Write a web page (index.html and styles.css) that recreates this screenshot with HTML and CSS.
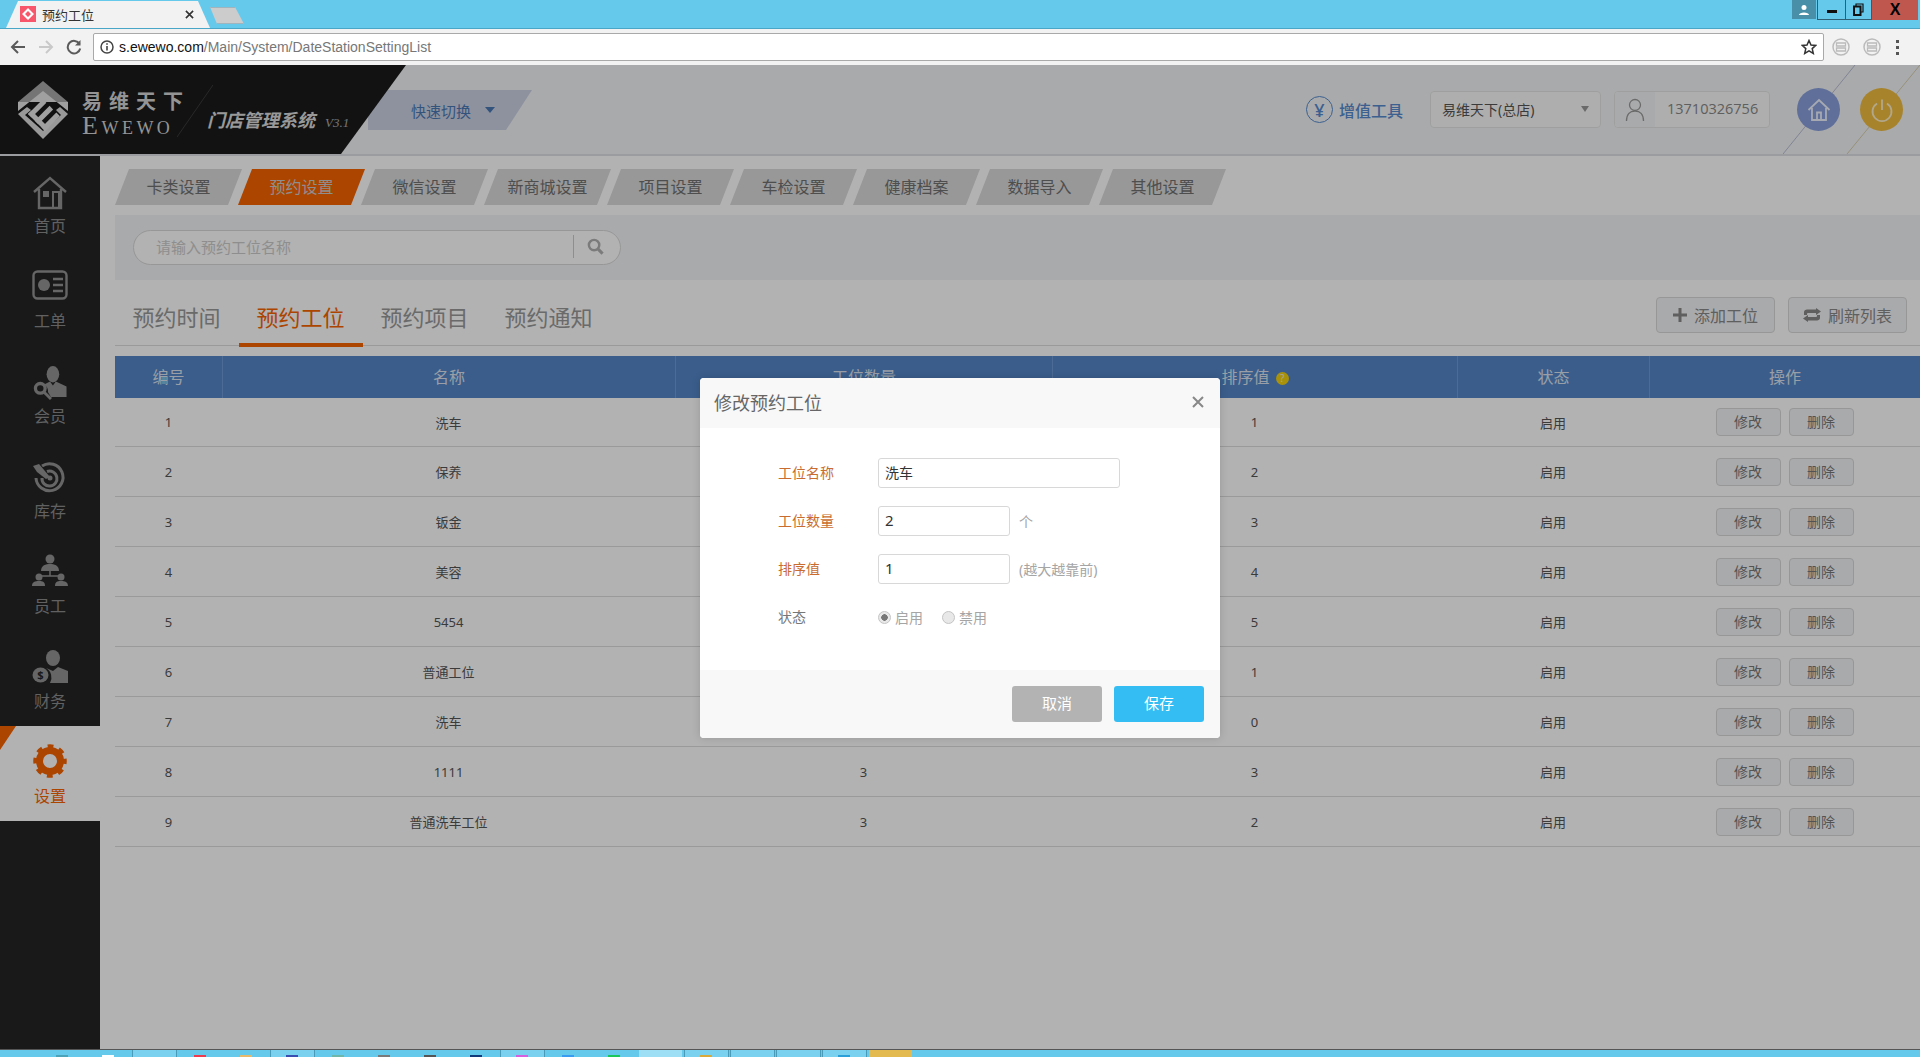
FILE: index.html
```html
<!DOCTYPE html>
<html lang="zh-CN">
<head>
<meta charset="utf-8">
<title>预约工位</title>
<link rel="stylesheet" href="styles.css">
</head>
<body>

<div class="tabstrip">
	<div class="chrome-tab">
		<svg class="favicon" viewBox="0 0 16 16"><rect width="16" height="16" fill="#f8566a"/><path d="M8 2 14 8 8 14 2 8Z M8 5 5 8 8 11 11 8Z" fill="#fff" fill-rule="evenodd"/></svg>
		<span class="chrome-title">预约工位</span>
		<svg class="chrome-close" viewBox="0 0 10 10"><path d="M1 1 9 9M9 1 1 9" stroke="#333" stroke-width="1.8"/></svg>
	</div>
	<div class="new-tab"></div>
	<div class="win-controls">
		<div class="win-user"><svg viewBox="0 0 12 12" width="12" height="12"><circle cx="6" cy="3.5" r="2.5" fill="#fff"/><path d="M1 11C1 7.500 11 7.500 11 11Z" fill="#fff"/></svg></div>
		<div class="win-btn win-min"><i></i></div>
		<div class="win-btn win-max"><svg viewBox="0 0 11 13" width="11" height="13"><path d="M3 3V1H10V9H8" fill="none" stroke="#111" stroke-width="1.2"/><rect x="1" y="3.500" width="6.500" height="8.500" fill="none" stroke="#111" stroke-width="2"/></svg></div>
		<div class="win-btn win-close">X</div>
	</div>
</div>

<div class="toolbar">
	<svg class="tool-icon" viewBox="0 0 16 16"><path d="M15 8H3M8 2 2 8 8 14" fill="none" stroke="#5a5a5a" stroke-width="2"/></svg>
	<svg class="tool-icon" viewBox="0 0 16 16"><path d="M1 8H13M8 2 14 8 8 14" fill="none" stroke="#c9c9c9" stroke-width="2"/></svg>
	<svg class="tool-icon" viewBox="0 0 16 16"><path d="M13.500 5A6.300 6.300 0 1 0 14.200 9.500" fill="none" stroke="#5a5a5a" stroke-width="2"/><path d="M14.500 1V6.500H9Z" fill="#5a5a5a"/></svg>
	<div class="addressbar">
		<svg class="info-icon" viewBox="0 0 14 14"><circle cx="7" cy="7" r="6" fill="none" stroke="#444" stroke-width="1.500"/><path d="M7 6V10.500M7 3.200V4.800" stroke="#444" stroke-width="1.600"/></svg>
		<span class="url"><b>s.ewewo.com</b>/Main/System/DateStationSettingList</span>
		<svg class="star-icon" viewBox="0 0 16 16"><path d="M8 1.500 10 6 14.800 6.400 11.200 9.600 12.300 14.400 8 11.800 3.700 14.400 4.800 9.600 1.200 6.400 6 6Z" fill="none" stroke="#333" stroke-width="1.500"/></svg>
	</div>
	<svg class="ext-icon" viewBox="0 0 18 18"><circle cx="9" cy="9" r="8" fill="none" stroke="#bbb" stroke-width="1.500"/><path d="M4.500 5H13.500V8H4.500ZM4.500 10H13.500V13H4.500Z" fill="none" stroke="#bbb" stroke-width="1.300"/></svg>
	<svg class="ext-icon" viewBox="0 0 18 18"><circle cx="9" cy="9" r="8" fill="none" stroke="#bbb" stroke-width="1.500"/><path d="M4.500 5H13.500V8H4.500ZM4.500 10H13.500V13H4.500Z" fill="none" stroke="#bbb" stroke-width="1.300"/></svg>
	<div class="menu-dots"><i></i><i></i><i></i></div>
</div>

<div class="app">
	<div class="header">
		<svg class="header-lines" viewBox="0 0 137 90" width="137" height="90"><path d="M72 0 0 89" stroke="#b9bdd4" fill="none"/><path d="M137 0 64 89" stroke="#d8cfae" fill="none"/></svg>
		<div class="brand">
			<svg class="logo" viewBox="0 0 50 58" width="50" height="58">
				<path d="M25 0 50 21H0Z" fill="#a8a8a8"/>
				<path d="M0 21H50V30L25 10 0 30Z" fill="#e6e6e6"/>
				<path d="M0 33 9 26 13 29 7 34 25 50 43 34 38 29 42 26 50 33 25 58Z" fill="#dcdcdc"/>
				<g transform="rotate(-45 27 33)" fill="#e6e6e6">
					<rect x="15" y="21" width="5" height="24"/>
					<rect x="15" y="21" width="21" height="5"/>
					<rect x="15" y="30.500" width="21" height="5"/>
					<rect x="15" y="40" width="21" height="5"/>
				</g>
			</svg>
			<div class="brand-name">
				<div class="brand-cn">易维天下</div>
				<div class="brand-en"><span>E</span>WEWO</div>
			</div>
			<svg class="brand-slash" viewBox="0 0 36 52" width="36" height="52"><path d="M36 0 0 52" stroke="#3a3a3a" fill="none"/></svg>
			<div class="brand-sys">门店管理系统<span>V3.1</span></div>
		</div>
		<div class="switch">快速切换<i class="caret"></i></div>
		<div class="head-right">
			<div class="tools"><span class="yen">¥</span>增值工具</div>
			<div class="shop">易维天下(总店)<i class="shop-caret"></i></div>
			<div class="account">
				<div class="account-icon"><svg viewBox="0 0 20 24" width="20" height="24"><circle cx="10" cy="7" r="5.500" fill="none" stroke="#9a9a9a" stroke-width="1.300"/><path d="M1.500 23C1.500 16 5 13 10 13S18.500 16 18.500 23" fill="none" stroke="#9a9a9a" stroke-width="1.300"/></svg></div>
				<div class="account-no">13710326756</div>
			</div>
			<div class="round round-home"><svg viewBox="0 0 24 24" width="24" height="24"><path d="M1.500 12 12 2 22.500 12M5 10V22H19V10M10 22V14.500H14V22" fill="none" stroke="#eef2ff" stroke-width="1.800"/></svg></div>
			<div class="round round-power"><svg viewBox="0 0 24 24" width="24" height="24"><path d="M12 1.500V12M7 5.500A9.500 9.500 0 1 0 17 5.500" fill="none" stroke="#fff0c8" stroke-width="1.800"/></svg></div>
		</div>
	</div>

	<div class="body">
		<div class="sidebar">
			<div class="side-item">
				<svg viewBox="0 0 34 34" width="34" height="34"><path d="M1 16 17 2 33 16M6 13V32H28V13" fill="none" stroke="#929292" stroke-width="2.400"/><rect x="10" y="15" width="6" height="6" fill="#929292"/><path d="M20 31V16H26V31" fill="none" stroke="#929292" stroke-width="2"/></svg>
				<span>首页</span>
			</div>
			<div class="side-item">
				<svg viewBox="0 1 36 34" width="36" height="34"><rect x="1.500" y="1.500" width="33" height="27" rx="4" fill="none" stroke="#929292" stroke-width="2.400"/><circle cx="12" cy="15" r="6" fill="#929292"/><path d="M21 9H31M21 15H31M21 21H31" stroke="#929292" stroke-width="2.400"/></svg>
				<span>工单</span>
			</div>
			<div class="side-item">
				<svg viewBox="0 0 36 35" width="36" height="35"><ellipse cx="21" cy="8.500" rx="6.500" ry="8.500" fill="#929292"/><path d="M12 19 18 16 21 20 24 16 35 21V32H19L16 27A9 9 0 0 0 12 19Z" fill="#929292"/><circle cx="8" cy="23" r="5" fill="none" stroke="#929292" stroke-width="3.400"/><path d="M12 27 19 34" stroke="#929292" stroke-width="3"/></svg>
				<span>会员</span>
			</div>
			<div class="side-item">
				<svg viewBox="0 0 36 30" width="36" height="30"><path d="M10 3A13.500 13.500 0 1 1 4 15" fill="none" stroke="#929292" stroke-width="3"/><path d="M15 8.500A7.500 7.500 0 1 1 10 15" fill="none" stroke="#929292" stroke-width="3"/><circle cx="18" cy="15" r="2.500" fill="#929292"/><path d="M1 3 7 1 18 14 14 16 5 9Z" fill="#929292"/></svg>
				<span>库存</span>
			</div>
			<div class="side-item">
				<svg viewBox="0 3 36 34" width="36" height="34"><circle cx="18" cy="6" r="4.500" fill="#929292"/><path d="M9 18C9 12 14 11 18 11S27 12 27 18Z" fill="#929292"/><path d="M18 18V23M8 23H28" stroke="#929292" stroke-width="1.500"/><circle cx="7" cy="24" r="3.500" fill="#929292"/><circle cx="29" cy="24" r="3.500" fill="#929292"/><path d="M0 33C0 29 3 28 7 28S13 29 13 33ZM23 33C23 29 25 28 29 28S36 29 36 33Z" fill="#929292"/></svg>
				<span>员工</span>
			</div>
			<div class="side-item">
				<svg viewBox="0 1 36 34" width="36" height="34"><ellipse cx="21" cy="8" rx="7" ry="8" fill="#929292"/><path d="M14 18 21 21 26 17 36 21V33H18A11 11 0 0 0 14 18Z" fill="#929292"/><ellipse cx="8.500" cy="25" rx="8" ry="7.500" fill="#929292"/><text x="8.500" y="29" class="coin">$</text></svg>
				<span>财务</span>
			</div>
			<div class="side-item side-active">
				<i class="side-flag"></i>
				<svg viewBox="0 2 34 34" width="34" height="34"><circle cx="17" cy="17" r="10.500" fill="none" stroke="#f76300" stroke-width="7"/><circle cx="17" cy="17" r="14" fill="none" stroke="#f76300" stroke-width="5.500" stroke-dasharray="5.500 5.500" stroke-dashoffset="2.700"/></svg>
				<span>设置</span>
			</div>
		</div>

		<div class="content">
			<div class="tabs">
				<div class="tab">卡类设置</div>
				<div class="tab tab-active">预约设置</div>
				<div class="tab">微信设置</div>
				<div class="tab">新商城设置</div>
				<div class="tab">项目设置</div>
				<div class="tab">车检设置</div>
				<div class="tab">健康档案</div>
				<div class="tab">数据导入</div>
				<div class="tab">其他设置</div>
			</div>
			<div class="search-panel">
				<div class="search-box">
					<span class="search-text">请输入预约工位名称</span>
					<div class="search-btn"><svg viewBox="0 0 18 18" width="17" height="17"><circle cx="7.500" cy="7.500" r="5.500" fill="none" stroke="#b0b0b0" stroke-width="2.600"/><path d="M11.500 11.500 16.500 16.500" stroke="#b0b0b0" stroke-width="3.200"/></svg></div>
				</div>
			</div>
			<div class="subnav">
				<div class="subtab">预约时间</div>
				<div class="subtab subtab-active">预约工位</div>
				<div class="subtab">预约项目</div>
				<div class="subtab">预约通知</div>
				<div class="subnav-btns">
					<div class="btn"><svg viewBox="0 0 14 14" width="14" height="14"><path d="M7 0V14M0 7H14" stroke="#888" stroke-width="3"/></svg>添加工位</div>
					<div class="btn"><svg viewBox="0 0 18 14" width="18" height="14"><path d="M1 7V4C1 2.500 2.500 1.500 4 1.500H13V0L18 3.500 13 7V5H5C4.500 5 4 5.500 4 6V7ZM17 7V10C17 11.500 15.500 12.500 14 12.500H5V14L0 10.500 5 7V9H13C13.500 9 14 8.500 14 8V7Z" fill="#888"/></svg>刷新列表</div>
				</div>
			</div>
			<table class="list">
				<colgroup><col class="c1"><col class="c2"><col class="c3"><col class="c4"><col class="c5"><col class="c6"></colgroup>
				<thead>
					<tr><th>编号</th><th>名称</th><th>工位数量</th><th>排序值 <i class="help">?</i></th><th>状态</th><th>操作</th></tr>
				</thead>
				<tbody>
					<tr><td>1</td><td>洗车</td><td>2</td><td>1</td><td>启用</td><td><span class="mini">修改</span><span class="mini">删除</span></td></tr>
					<tr><td>2</td><td>保养</td><td>3</td><td>2</td><td>启用</td><td><span class="mini">修改</span><span class="mini">删除</span></td></tr>
					<tr><td>3</td><td>钣金</td><td>3</td><td>3</td><td>启用</td><td><span class="mini">修改</span><span class="mini">删除</span></td></tr>
					<tr><td>4</td><td>美容</td><td>3</td><td>4</td><td>启用</td><td><span class="mini">修改</span><span class="mini">删除</span></td></tr>
					<tr><td>5</td><td>5454</td><td>3</td><td>5</td><td>启用</td><td><span class="mini">修改</span><span class="mini">删除</span></td></tr>
					<tr><td>6</td><td>普通工位</td><td>3</td><td>1</td><td>启用</td><td><span class="mini">修改</span><span class="mini">删除</span></td></tr>
					<tr><td>7</td><td>洗车</td><td>3</td><td>0</td><td>启用</td><td><span class="mini">修改</span><span class="mini">删除</span></td></tr>
					<tr><td>8</td><td>1111</td><td>3</td><td>3</td><td>启用</td><td><span class="mini">修改</span><span class="mini">删除</span></td></tr>
					<tr><td>9</td><td>普通洗车工位</td><td>3</td><td>2</td><td>启用</td><td><span class="mini">修改</span><span class="mini">删除</span></td></tr>
				</tbody>
			</table>
		</div>
	</div>

	<div class="mask">
		<div class="dialog">
			<div class="dialog-head">
				<span>修改预约工位</span>
				<svg viewBox="0 0 12 12" width="12" height="12"><path d="M1 1 11 11M11 1 1 11" stroke="#888" stroke-width="2"/></svg>
			</div>
			<div class="dialog-body">
				<div class="field">
					<label class="required">工位名称</label>
					<div class="input input-wide">洗车</div>
				</div>
				<div class="field">
					<label class="required">工位数量</label>
					<div class="input">2</div>
					<span class="hint">个</span>
				</div>
				<div class="field">
					<label class="required">排序值</label>
					<div class="input">1</div>
					<span class="hint">(越大越靠前)</span>
				</div>
				<div class="field">
					<label>状态</label>
					<span class="radio radio-on"></span><span class="radio-text">启用</span>
					<span class="radio"></span><span class="radio-text">禁用</span>
				</div>
			</div>
			<div class="dialog-foot">
				<div class="dlg-btn dlg-cancel">取消</div>
				<div class="dlg-btn dlg-save">保存</div>
			</div>
		</div>
	</div>
</div>

<div class="taskbar">
	<div class="slot"><i class="stub" style="background:#4aa3b8"></i></div>
	<div class="slot"><i class="stub" style="background:#fff"></i></div>
	<div class="slot slot-on"></div>
	<div class="slot"><i class="stub" style="background:#ef3b4e"></i></div>
	<div class="slot"><i class="stub" style="background:#e8b96a"></i></div>
	<div class="slot slot-on"><i class="stub" style="background:#3a4db0"></i></div>
	<div class="slot"><i class="stub" style="background:#6fb7a8"></i></div>
	<div class="slot"><i class="stub" style="background:#7a7a7a"></i></div>
	<div class="slot"><i class="stub" style="background:#555"></i></div>
	<div class="slot"><i class="stub" style="background:#103a7a"></i></div>
	<div class="slot slot-on"><i class="stub" style="background:#d65fe0"></i></div>
	<div class="slot"><i class="stub" style="background:#3a9cf0"></i></div>
	<div class="slot"><i class="stub" style="background:#19c75a"></i></div>
	<div class="slot slot-open"></div>
	<div class="slot slot-on"><i class="stub" style="background:#d9a93a"></i></div>
	<div class="slot slot-on"></div>
	<div class="slot slot-on"></div>
	<div class="slot slot-on"><i class="stub" style="background:#2a9fd8"></i></div>
	<div class="slot slot-gold"></div>
</div>

</body>
</html>
```

FILE: styles.css
```css
* {
	box-sizing: border-box;
}
html, body {
	margin: 0;
	height: 100%;
	overflow: hidden;
}
body {
	display: flex;
	flex-direction: column;
	font-family: "Noto Sans", "Noto Sans CJK SC", sans-serif;
	font-size: 13px;
	color: #555;
	background-color: #fff;
}
i {
	display: block;
	font-style: normal;
}

/* browser frame */
.tabstrip {
	height: 29px;
	display: flex;
	background-color: #65c9ec;
	border-bottom: 1px solid #4aa6c6;
	position: relative;
}
.chrome-tab {
	width: 204px;
	margin-left: 6px;
	padding: 0 16px 0 14px;
	display: flex;
	align-items: center;
	background-color: #f2f2f2;
	clip-path: polygon(0 100%, 12px 1px, 192px 1px, 204px 100%);
}
.favicon {
	width: 16px;
	height: 16px;
	margin-right: 6px;
}
.chrome-title {
	flex: 1;
	font-size: 13px;
	color: #333;
}
.chrome-close {
	width: 9px;
	height: 9px;
}
.new-tab {
	width: 34px;
	height: 17px;
	margin-top: 7px;
	background-color: #ccc;
	border: 1px solid #9fb4bd;
	clip-path: polygon(0 0, 25px 0, 34px 100%, 7px 100%);
}
.win-controls {
	margin-left: auto;
	margin-right: 2px;
	display: flex;
	height: 20px;
}
.win-user {
	width: 24px;
	height: 19px;
	margin-right: 1px;
	background-color: #4a8fa8;
	display: flex;
	align-items: center;
	justify-content: center;
}
.win-btn {
	height: 20px;
	display: flex;
	align-items: center;
	justify-content: center;
	border: 1px solid #2e5f72;
	border-top: 0;
	border-left-width: 1px;
}
.win-min {
	width: 29px;
}
.win-min i {
	width: 10px;
	height: 3px;
	margin-top: 3px;
	background-color: #111;
}
.win-max {
	width: 26px;
	border-left: 0;
}
.win-close {
	width: 46px;
	border: 0;
	background-color: #c0574f;
	font: bold 16px "Liberation Sans", sans-serif;
	color: #000;
}
.toolbar {
	height: 36px;
	display: flex;
	align-items: center;
	padding: 0 10px 0 10px;
	background-color: #f2f2f2;
}
.tool-icon {
	width: 16px;
	height: 16px;
	margin-right: 12px;
}
.toolbar .tool-icon:nth-child(3) {
	margin-right: 11px;
}
.addressbar {
	width: 1731px;
	height: 28px;
	display: flex;
	align-items: center;
	padding: 0 6px;
	background-color: #fff;
	border: 1px solid #a9a9a9;
	border-radius: 2px;
}
.info-icon {
	width: 14px;
	height: 14px;
	margin-right: 5px;
}
.url {
	flex: 1;
	font-family: "Liberation Sans", sans-serif;
	font-size: 14px;
	color: #777;
}
.url b {
	font-weight: 400;
	color: #111;
}
.star-icon {
	width: 16px;
	height: 16px;
}
.ext-icon {
	width: 18px;
	height: 18px;
	margin-left: 8px;
	margin-right: 5px;
}
.menu-dots {
	margin-left: 10px;
}
.menu-dots i {
	width: 3px;
	height: 3px;
	margin: 3px 0;
	background-color: #555;
}

/* page */
.app {
	position: relative;
	flex: 1;
	display: flex;
	flex-direction: column;
	min-height: 0;
}
.header {
	position: relative;
	height: 91px;
	flex: none;
	display: flex;
	background-color: #f3f4f7;
	border-bottom: 2px solid #dde0e4;
}
.header-lines {
	position: absolute;
	right: 0;
	top: 0;
}
.brand {
	position: relative;
	width: 406px;
	display: flex;
	align-items: flex-start;
	padding: 16px 0 0 18px;
	background-color: #1b1b1b;
	clip-path: polygon(0 0, 100% 0, 341px 100%, 0 100%);
	z-index: 1;
}
.brand-name {
	margin: 11px 0 0 14px;
}
.brand-cn {
	font-size: 20px;
	line-height: 20px;
	font-weight: 700;
	letter-spacing: 7px;
	color: #d4d4d4;
}
.brand-en {
	margin-top: 5px;
	font-family: "Liberation Serif", serif;
	font-size: 18px;
	line-height: 18px;
	letter-spacing: 3.500px;
	color: #d4d4d4;
}
.brand-en span {
	font-size: 26px;
}
.brand-slash {
	position: absolute;
	left: 177px;
	top: 20px;
}
.brand-sys {
	position: absolute;
	left: 207px;
	top: 43px;
	font-size: 18px;
	line-height: 24px;
	font-weight: 700;
	font-style: italic;
	color: #dcdcdc;
	white-space: nowrap;
}
.brand-sys span {
	margin-left: 10px;
	font-family: "Liberation Serif", serif;
	font-size: 13px;
	font-weight: 400;
	color: #aaa;
}
.switch {
	width: 164px;
	height: 40px;
	margin: 25px 0 0 -38px;
	padding-left: 43px;
	display: flex;
	align-items: center;
	font-size: 15px;
	color: #4a78b4;
	background-color: #ccd2e4;
	clip-path: polygon(0 0, 100% 0, 138px 100%, 0 100%);
}
.caret {
	width: 0;
	height: 0;
	margin-left: 14px;
	border: 5px solid transparent;
	border-top: 6px solid #4a78b4;
	border-bottom: 0;
}
.head-right {
	position: relative;
	margin-left: auto;
	padding-right: 17px;
	display: flex;
	align-items: center;
}
.tools {
	display: flex;
	align-items: center;
	font-size: 16px;
	font-weight: 500;
	color: #568ace;
}
.yen {
	width: 27px;
	height: 27px;
	margin-right: 6px;
	display: flex;
	align-items: center;
	justify-content: center;
	font-size: 18px;
	border: 1.500px solid #568ace;
	border-radius: 50%;
}
.shop {
	width: 171px;
	height: 37px;
	margin-left: 27px;
	padding: 0 11px 2px;
	display: flex;
	align-items: center;
	justify-content: space-between;
	font-size: 14px;
	color: #555;
	background-color: #fafafa;
	border: 1px solid #e4e4e4;
	border-radius: 4px;
}
.shop-caret {
	width: 0;
	height: 0;
	border: 4px solid transparent;
	border-top: 6px solid #999;
	border-bottom: 0;
}
.account {
	width: 156px;
	height: 37px;
	margin-left: 13px;
	display: flex;
	overflow: hidden;
	background-color: #fafafa;
	border: 1px solid #e4e4e4;
	border-radius: 4px;
}
.account-icon {
	width: 40px;
	display: flex;
	align-items: center;
	justify-content: center;
	background-color: #f3f4f7;
}
.account-no {
	padding-left: 12px;
	line-height: 33px;
	font-family: "Open Sans", sans-serif;
	font-size: 14.500px;
	color: #888;
}
.round {
	width: 43px;
	height: 43px;
	display: flex;
	align-items: center;
	justify-content: center;
	border-radius: 50%;
}
.round-home {
	margin-left: 27px;
	background-color: #88a0dc;
}
.round-power {
	margin-left: 20px;
	background-color: #f0bc3e;
}
.body {
	flex: 1;
	min-height: 0;
	display: flex;
}
.sidebar {
	width: 100px;
	flex: none;
	background-color: #252525;
}
.side-item {
	position: relative;
	height: 95px;
	padding-top: 20px;
	display: flex;
	flex-direction: column;
	align-items: center;
	justify-content: flex-start;
	font-size: 16px;
	color: #8c8c8c;
}
.side-item svg {
	height: 34px;
	flex: none;
	overflow: visible;
}
.side-item span {
	margin-top: 4px;
	line-height: 24px;
}
.side-active {
	background-color: #fff;
	color: #f76300;
}
.side-flag {
	position: absolute;
	left: 0;
	top: 0;
	width: 0;
	height: 0;
	border-top: 24px solid #f76300;
	border-right: 16px solid transparent;
}
.coin {
	font-size: 11px;
	font-weight: 700;
	fill: #252525;
	text-anchor: middle;
}
.content {
	flex: 1;
	min-width: 0;
	padding: 13px 0 0 15px;
}
.tabs {
	display: flex;
}
.tab {
	width: 127px;
	height: 36px;
	margin-right: -4px;
	padding-bottom: 2px;
	display: flex;
	align-items: center;
	justify-content: center;
	font-size: 16px;
	color: #707070;
	background-color: #dadada;
	clip-path: polygon(14px 0, 100% 0, 113px 100%, 0 100%);
}
.tab-active {
	color: #ccc;
	background-color: #f76300;
}
.search-panel {
	height: 65px;
	margin-top: 10px;
	padding: 15px 18px;
	background-color: #f3f4f7;
}
.search-box {
	width: 488px;
	height: 35px;
	padding: 0 0 2px 22px;
	display: flex;
	align-items: center;
	justify-content: space-between;
	background-color: #fff;
	border: 1px solid #d8d8d8;
	border-radius: 18px;
}
.search-text {
	font-size: 15px;
	color: #ccc;
}
.search-btn {
	width: 47px;
	height: 23px;
	padding-right: 4px;
	display: flex;
	align-items: center;
	justify-content: center;
	border-left: 1px solid #ccc;
}
.subnav {
	height: 66px;
	display: flex;
	align-items: flex-end;
	border-bottom: 1px solid #ddd;
}
.subtab {
	height: 53px;
	margin-bottom: -2px;
	padding: 0 18.500px 0 17.500px;
	font-size: 22px;
	line-height: 46px;
	color: #999;
	border-bottom: 4px solid transparent;
}
.subtab-active {
	color: #f76300;
	border-bottom-color: #f76300;
}
.subnav-btns {
	align-self: flex-start;
	margin: 17px 13px 0 auto;
	display: flex;
	gap: 13px;
}
.btn {
	width: 119px;
	height: 36px;
	display: flex;
	align-items: center;
	justify-content: center;
	gap: 7px;
	font-size: 16px;
	color: #888;
	background-color: #f3f4f7;
	border: 1px solid #d8d8d8;
	border-radius: 4px;
}
.list {
	width: 100%;
	margin-top: 10px;
	table-layout: fixed;
	border-collapse: separate;
	border-spacing: 0;
}
.c1 { width: 107px; }
.c2 { width: 453px; }
.c3 { width: 377px; }
.c4 { width: 405px; }
.c5 { width: 192px; }
.list th {
	height: 42px;
	padding: 0 0 2px;
	font-size: 16px;
	font-weight: 400;
	color: #dde3ee;
	background-color: #5486c8;
	border-left: 1px solid #6e9ad6;
}
.list th:first-child {
	border-left: 0;
}
.help {
	display: inline-block;
	width: 13px;
	height: 13px;
	margin-left: 2px;
	font-size: 10px;
	line-height: 13px;
	color: #eee;
	background-color: #f2d20f;
	border-radius: 50%;
	vertical-align: 1px;
}
.list td {
	height: 50px;
	padding: 0;
	text-align: center;
	font-size: 13px;
	color: #555;
	border-bottom: 1px solid #ddd;
}
.list tbody tr:first-child td {
	height: 49px;
}
.mini {
	display: inline-block;
	width: 65px;
	height: 28px;
	margin: 0 4px;
	font-size: 14px;
	line-height: 25px;
	color: #777;
	background-color: #f3f4f7;
	border: 1px solid #d8d8d8;
	border-radius: 4px;
	vertical-align: middle;
}

/* dialog */
.mask {
	position: absolute;
	left: 0;
	right: 0;
	top: 0;
	bottom: 0;
	padding-top: 313px;
	display: flex;
	justify-content: center;
	align-items: flex-start;
	background-color: rgba(0, 0, 0, 0.3);
	z-index: 5;
}
.dialog {
	width: 520px;
	height: 360px;
	display: flex;
	flex-direction: column;
	overflow: hidden;
	background-color: #fff;
	border-radius: 4px;
	box-shadow: 0 0 8px rgba(0, 0, 0, 0.15);
}
.dialog-head {
	height: 50px;
	padding: 0 16px 2px 14px;
	display: flex;
	align-items: center;
	justify-content: space-between;
	font-size: 18px;
	color: #666;
	background-color: #f8f8f8;
}
.dialog-body {
	flex: 1;
	padding: 30px 0 0 78px;
}
.field {
	height: 30px;
	margin-bottom: 18px;
	display: flex;
	align-items: center;
	font-size: 14px;
	color: #888;
}
.field label {
	width: 100px;
	padding-bottom: 2px;
	color: #777;
}
.field label.required {
	color: #c96c2f;
}
.input {
	width: 132px;
	height: 30px;
	padding-left: 6px;
	font-size: 15px;
	line-height: 27px;
	color: #333;
	border: 1px solid #d8d8d8;
	border-radius: 3px;
}
.input-wide {
	width: 242px;
	font-size: 14px;
}
.hint {
	margin-left: 9px;
	font-size: 14px;
	color: #a5a5a5;
}
.radio {
	width: 13px;
	height: 13px;
	margin-right: 4px;
	background-color: #e8e8e8;
	border: 1px solid #c4c4c4;
	border-radius: 50%;
}
.radio-on {
	background: radial-gradient(circle, #777 3px, #e8e8e8 3.500px);
}
.radio-text {
	width: 47px;
	color: #a5a5a5;
}
.dialog-foot {
	height: 68px;
	padding: 16px 16px 0 0;
	display: flex;
	justify-content: flex-end;
	gap: 12px;
	background-color: #f8f8f8;
}
.dlg-btn {
	width: 90px;
	height: 36px;
	font-size: 15px;
	line-height: 35px;
	text-align: center;
	color: #fff;
	border-radius: 3px;
}
.dlg-cancel {
	background-color: #b3b3b3;
}
.dlg-save {
	background-color: #33bdf2;
}

/* windows taskbar, mostly cut off by the bottom of the window */
.taskbar {
	height: 8px;
	flex: none;
	display: flex;
	padding-left: 41px;
	gap: 3px;
	background-color: #65c9ec;
	border-top: 1px solid #555;
}
.slot {
	width: 43px;
	position: relative;
}
.slot-on {
	background-color: #79d1ef;
	box-shadow: 1px 0 0 #4a9bb8, -1px 0 0 #4a9bb8;
}
.slot-open {
	background-color: #9fdff5;
}
.slot-gold {
	background-color: #e2ba50;
}
.stub {
	position: absolute;
	left: 15px;
	bottom: 0;
	width: 12px;
	height: 2px;
}
```
